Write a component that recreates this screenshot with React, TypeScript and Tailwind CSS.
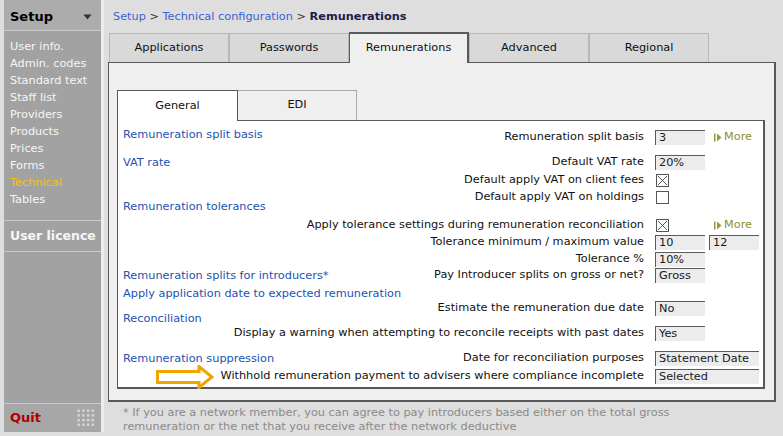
import React from 'react';

const FONT = "font-['DejaVu_Sans',Verdana,sans-serif]";

const menuItems = [
  'User info.',
  'Admin. codes',
  'Standard text',
  'Staff list',
  'Providers',
  'Products',
  'Prices',
  'Forms',
  'Technical',
  'Tables'
];

const outerTabs = ['Applications', 'Passwords', 'Remunerations', 'Advanced', 'Regional'];

type Control =
  | { kind: 'input'; value: string; wide?: boolean }
  | { kind: 'pair'; a: string; b: string }
  | { kind: 'check'; checked: boolean };

interface Row {
  label: string;
  control: Control;
  more?: boolean;
  arrow?: boolean;
  mt: string;
}

const rows: Row[] = [
  { label: 'Remuneration split basis', control: { kind: 'input', value: '3' }, more: true, mt: 'mt-[8px]' },
  { label: 'Default VAT rate', control: { kind: 'input', value: '20%' }, mt: 'mt-[8px]' },
  { label: 'Default apply VAT on client fees', control: { kind: 'check', checked: true }, mt: 'mt-px' },
  { label: 'Default apply VAT on holdings', control: { kind: 'check', checked: false }, mt: 'mt-0' },
  {
    label: 'Apply tolerance settings during remuneration reconciliation',
    control: { kind: 'check', checked: true },
    more: true,
    mt: 'mt-[11px]'
  },
  { label: 'Tolerance minimum / maximum value', control: { kind: 'pair', a: '10', b: '12' }, mt: 'mt-0' },
  { label: 'Tolerance %', control: { kind: 'input', value: '10%' }, mt: 'mt-0' },
  { label: 'Pay Introducer splits on gross or net?', control: { kind: 'input', value: 'Gross' }, mt: 'mt-[-1px]' },
  { label: 'Estimate the remuneration due date', control: { kind: 'input', value: 'No' }, mt: 'mt-[16px]' },
  {
    label: 'Display a warning when attempting to reconcile receipts with past dates',
    control: { kind: 'input', value: 'Yes' },
    mt: 'mt-[8px]'
  },
  {
    label: 'Date for reconciliation purposes',
    control: { kind: 'input', value: 'Statement Date', wide: true },
    mt: 'mt-[8px]'
  },
  {
    label: 'Withhold remuneration payment to advisers where compliance incomplete',
    control: { kind: 'input', value: 'Selected', wide: true },
    arrow: true,
    mt: 'mt-px'
  }
];

const headings = [
  { text: 'Remuneration split basis', mt: 'mt-[5px]' },
  { text: 'VAT rate', mt: 'mt-[11px]' },
  { text: 'Remuneration tolerances', mt: 'mt-[27px]' },
  { text: 'Remuneration splits for introducers*', mt: 'mt-[52px]' },
  { text: 'Apply application date to expected remuneration', mt: 'mt-px' },
  { text: 'Reconciliation', mt: 'mt-[8px]' },
  { text: 'Remuneration suppression', mt: 'mt-[23px]' }
];

const TextBox = ({ value, wide }: { value: string; wide?: boolean }) => (
  <div
    className={`${wide ? 'w-[104px]' : 'w-[50px]'} h-[15px] bg-[#ececec] border-t border-l border-[#5a5a5a] pl-[3px] leading-[14px] text-[#1a1a1a] whitespace-nowrap overflow-hidden`}
  >
    {value}
  </div>
);

const CheckBox = ({ checked }: { checked: boolean }) => (
  <div className="ml-px w-[13px] h-[13px] border border-[#555] bg-white flex items-center justify-center">
    {checked && (
      <svg width="11" height="11" viewBox="0 0 11 11">
        <path d="M1 1 L10 10 M10 1 L1 10" stroke="#555" strokeWidth="1" />
      </svg>
    )}
  </div>
);

const MoreLink = () => (
  <span className="flex items-center gap-[2px] text-[#8f8f2a]">
    <svg width="8" height="9" viewBox="0 0 8 9">
      <rect x="0" y="0.5" width="1.5" height="8" fill="#9a9a33" />
      <path d="M3 0.5 L7.5 4.5 L3 8.5 Z" fill="#9a9a33" />
    </svg>
    More
  </span>
);

const Arrow = () => (
  <svg width="58" height="24" viewBox="0 0 58 24" className="mr-[6px] shrink-0">
    <path
      d="M1.5 6.5 L43 6.5 L43 1.5 L56 12 L43 22.5 L43 17.5 L1.5 17.5 Z"
      fill="white"
      stroke="#f0a500"
      strokeWidth="3"
      strokeLinejoin="miter"
    />
  </svg>
);

const Sidebar = () => (
  <aside className="ml-[4px] mb-[4px] w-[97px] bg-[#a2a2a2] flex flex-col shrink-0">
    <div className="h-[31px] pt-[3px] bg-[#acacac] border-b border-[#c9c9c9] flex items-center justify-between pl-[6px] pr-[9px]">
      <span className="font-bold text-[13px] text-black">Setup</span>
      <svg width="9" height="6" viewBox="0 0 9 6">
        <path d="M0.5 0.5 L8.5 0.5 L4.5 5.5 Z" fill="#333" />
      </svg>
    </div>
    <ul className="pt-[7px] pl-[6px]">
      {menuItems.map((item) => (
        <li
          key={item}
          className={`h-[17px] leading-[17px] text-[11.3px] ${item === 'Technical' ? 'text-[#f2c21a]' : 'text-[#f6f6f6]'}`}
        >
          {item}
        </li>
      ))}
    </ul>
    <div className="mt-[12px] h-[32px] pt-px border-t border-b border-[#c9c9c9] flex items-center pl-[6px]">
      <span className="font-bold text-[12.5px] text-[#f6f6f6]">User licence</span>
    </div>
    <div className="flex-1" />
    <div className="h-[29px] border-t border-[#c9c9c9] bg-[#a7a7a7] flex items-center justify-between pl-[6px] pr-[6px]">
      <span className="font-bold text-[13px] text-[#b00000]">Quit</span>
      <svg width="18" height="18" viewBox="0 0 18 18">
        {[0, 1, 2, 3].map((r) =>
          [0, 1, 2, 3].map((c) => (
            <rect key={`${r}-${c}`} x={c * 4.7 + 0.5} y={r * 4.7 + 0.5} width="2.4" height="2.4" fill="#d6d6d6" />
          ))
        )}
      </svg>
    </div>
  </aside>
);

const renderControl = (row: Row) => {
  const c = row.control;
  if (c.kind === 'check') return <CheckBox checked={c.checked} />;
  if (c.kind === 'pair')
    return (
      <div className="flex gap-[4px]">
        <TextBox value={c.a} />
        <TextBox value={c.b} />
      </div>
    );
  return <TextBox value={c.value} wide={c.wide} />;
};

const GeneralPanel = () => (
  <div className="grid ml-[8px] mr-[9px] bg-white border-t border-l border-r-2 border-b-2 border-[#585858] pb-[2px]">
    {/* headings, left */}
    <div className="col-start-1 row-start-1 pl-[5px] flex flex-col items-start">
      {headings.map((h) => (
        <div key={h.text} className={`${h.mt} h-[17px] leading-[17px] text-[#2152b3] whitespace-nowrap`}>
          {h.text}
        </div>
      ))}
    </div>
    {/* settings, right */}
    <div className="col-start-1 row-start-1 flex flex-col">
      {rows.map((row) => (
        <div key={row.label} className={`${row.mt} h-[17px] flex items-center`}>
          <div className="flex-1 flex items-center justify-end pr-[11px] whitespace-nowrap text-[#111]">
            {row.arrow && <Arrow />}
            <span>{row.label}</span>
          </div>
          <div className="w-[108px] flex items-center">
            <div className={row.more ? 'w-[59px] flex' : 'flex'}>{renderControl(row)}</div>
            {row.more && <MoreLink />}
          </div>
        </div>
      ))}
    </div>
  </div>
);

export default function App() {
  return (
    <div className={`${FONT} w-[783px] h-[436px] bg-[#dedede] flex overflow-hidden text-[11.3px]`}>
      <Sidebar />
      <div className="w-[3px] bg-[#ececec] mb-[4px]" />
      <main className="flex-1 pl-[4px] pr-[7px] flex flex-col">
        <div className="h-[32px] pt-[8px] pl-[5px] leading-[17px] text-[11.3px] whitespace-nowrap">
          <span className="text-[#3a60d6]">Setup</span>
          <span className="text-[#333]"> &gt; </span>
          <span className="text-[#3a60d6]">Technical configuration</span>
          <span className="text-[#333]"> &gt; </span>
          <span className="font-bold text-[#1b1b4d]">Remunerations</span>
        </div>

        <div className="flex items-end ml-px h-[30px]">
          {outerTabs.map((tab) => {
            const active = tab === 'Remunerations';
            return (
              <div
                key={tab}
                className={
                  active
                    ? 'relative z-10 -mb-px w-[120px] h-[31px] bg-[#efefef] border-t-2 border-l border-r-2 border-[#5a5a5a] flex items-center justify-center text-[#111]'
                    : 'w-[120px] h-[29px] bg-[#d9d9d9] border-t border-l border-r border-[#b7b7b7] flex items-center justify-center text-[#111]'
                }
              >
                {tab}
              </div>
            );
          })}
        </div>

        <section className="bg-[#efefef] border-t border-l border-r-2 border-b-2 border-[#585858] pt-[27px] pb-[11px]">
          <div className="flex items-end ml-[8px] h-[30px]">
            <div className="relative z-10 -mb-px w-[121px] h-[31px] bg-white border-t border-l border-r border-[#585858] flex items-center justify-center text-[#111]">
              General
            </div>
            <div className="w-[119px] h-[30px] bg-[#efefef] border-t border-r border-[#aaaaaa] flex items-center justify-center text-[#111]">
              EDI
            </div>
          </div>
          <GeneralPanel />
        </section>

        <p className="mt-[4px] pl-[15px] leading-[14px] text-[#8a8a8a]">
          * If you are a network member, you can agree to pay introducers based either on the total gross
          <br />
          remuneration or the net that you receive after the network deductive
        </p>
      </main>
    </div>
  );
}
